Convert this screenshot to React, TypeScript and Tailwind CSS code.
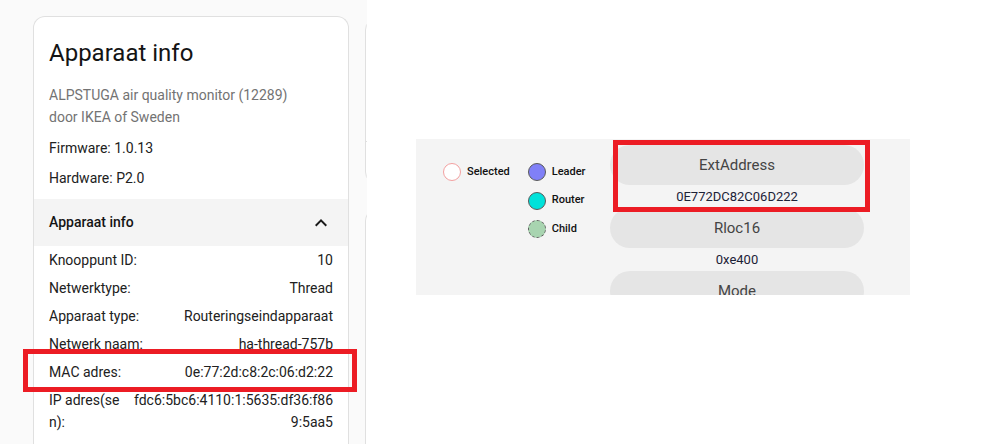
import React from 'react';

type InfoRow = { label: string; value: string };

const rows: InfoRow[] = [
  { label: 'Knooppunt ID:', value: '10' },
  { label: 'Netwerktype:', value: 'Thread' },
  { label: 'Apparaat type:', value: 'Routeringseindapparaat' },
  { label: 'Netwerk naam:', value: 'ha-thread-757b' },
  { label: 'MAC adres:', value: '0e:77:2d:c8:2c:06:d2:22' },
];

const fields = [
  { name: 'ExtAddress', value: '0E772DC82C06D222' },
  { name: 'Rloc16', value: '0xe400' },
  { name: 'Mode', value: '' },
];

const LegendDot = ({ className }: { className: string }) => (
  <span className={`w-[18px] h-[18px] rounded-full shrink-0 ${className}`} />
);

const App = () => {
  return (
    <div className="relative w-[1000px] h-[444px] flex overflow-hidden bg-white font-['Roboto','Noto_Sans',sans-serif] text-[#212121]">
      {/* device page, left part */}
      <div className="w-[367px] h-full shrink-0 bg-[#fafafa] flex gap-[16px] pl-[33px] pt-[16px] overflow-hidden">
        <div className="w-[316px] shrink-0 bg-white border border-[#e0e0e0] rounded-t-[12px] border-b-0">
          <div className="px-[15px] pt-[20px]">
            <h1 className="text-[24px] leading-[32px] font-normal text-[#141414]">Apparaat info</h1>
            <p className="mt-[15px] text-[14px] leading-[22px] text-[#737373]">
              ALPSTUGA air quality monitor (12289)
              <br />
              door IKEA of Sweden
            </p>
            <p className="mt-[9px] text-[14px] leading-[22px]">Firmware: 1.0.13</p>
            <p className="mt-[8px] text-[14px] leading-[22px]">Hardware: P2.0</p>
          </div>

          <div className="mt-[10px] h-[47px] bg-[#f4f4f4] flex items-center justify-between pl-[15px] pr-[15px]">
            <span className="text-[14px] font-medium text-[#141414]">Apparaat info</span>
            <svg width="24" height="24" viewBox="0 0 24 24" className="text-[#1a1a1a]">
              <path fill="currentColor" d="M7.41,15.41L12,10.83L16.59,15.41L18,14L12,8L6,14L7.41,15.41Z" />
            </svg>
          </div>

          <div className="px-[15px] text-[14px] leading-[22px]">
            {rows.map((row) => (
              <div key={row.label} className="flex justify-between py-[3px]">
                <span>{row.label}</span>
                <span className="text-right">{row.value}</span>
              </div>
            ))}
            <div className="flex py-[3px]">
              <span className="w-[80px] shrink-0 break-all">IP adres(sen):</span>
              <span className="flex-1 text-right break-all">fdc6:5bc6:4110:1:5635:df36:f869:5aa5</span>
            </div>
          </div>
        </div>

        <div className="w-[300px] shrink-0 mt-[2px] flex flex-col gap-[25px]">
          <div className="h-[166px] bg-white border border-[#e0e0e0] rounded-[12px] flex flex-col">
            <div className="flex-1" />
            <div className="h-[42px] border-t border-[#e0e0e0]" />
          </div>
          <div className="flex-1 bg-white border border-[#e0e0e0] rounded-t-[12px] border-b-0" />
        </div>
      </div>

      {/* thread network graph excerpt */}
      <div className="flex-1 pt-[139px] pl-[49px]">
        <div className="w-[494px] h-[156px] bg-[#f4f4f4] overflow-hidden flex pl-[27px]">
          <div className="w-[167px] shrink-0 pt-[19px] flex gap-[18px] text-[11px] font-medium text-[#111]">
            <div className="h-[28px] flex items-center gap-[6px]">
              <LegendDot className="bg-white border border-[#f3a0a0]" />
              <span>Selected</span>
            </div>
            <div className="flex flex-col">
              <div className="h-[28px] flex items-center gap-[6px]">
                <LegendDot className="bg-[#8080f7] border border-[#5a5a5a]" />
                <span>Leader</span>
              </div>
              <div className="h-[29px] flex items-center gap-[6px]">
                <LegendDot className="bg-[#00e2da] border border-[#5a5a5a]" />
                <span>Router</span>
              </div>
              <div className="h-[28px] flex items-center gap-[6px]">
                <LegendDot className="bg-[#a8d4b0] border border-dashed border-[#5a5a5a]" />
                <span>Child</span>
              </div>
            </div>
          </div>

          <div className="w-[254px] shrink-0 pt-[6px] flex flex-col">
            {fields.map((f) => (
              <div key={f.name} className="flex flex-col">
                <div className="h-[40px] shrink-0 rounded-full bg-[#e5e5e5] flex items-center justify-center text-[15px] text-[#444]">
                  {f.name}
                </div>
                {f.value && (
                  <div className="h-[23px] flex items-center justify-center text-[13px] text-[#1c2237]">
                    {f.value}
                  </div>
                )}
              </div>
            ))}
          </div>
        </div>
      </div>

      {/* annotation boxes */}
      <div className="absolute left-[23px] top-[349px] w-[334px] h-[43px] border-[5px] border-[#ec1c24]" />
      <div className="absolute left-[613px] top-[140px] w-[257px] h-[72px] border-[5px] border-[#ec1c24]" />
    </div>
  );
};

export default App;
